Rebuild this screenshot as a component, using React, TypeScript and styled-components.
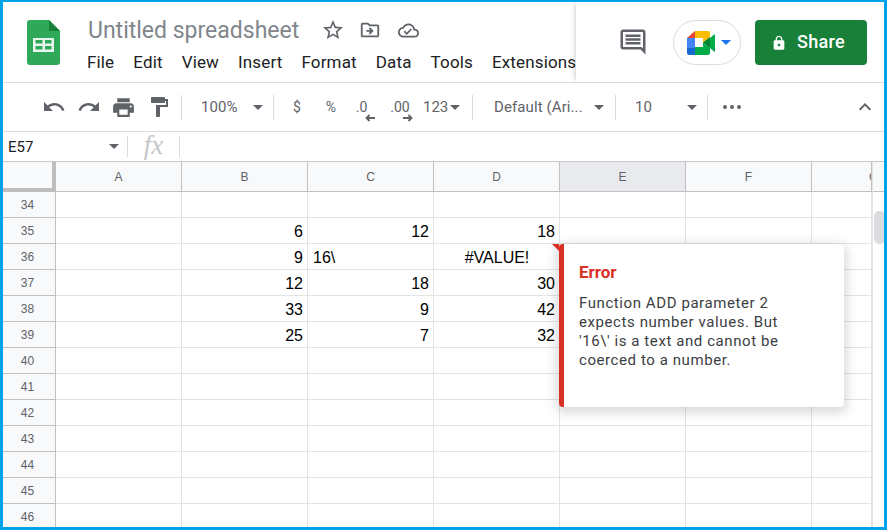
import React from 'react'
import styled, { createGlobalStyle } from 'styled-components'

const GlobalStyle = createGlobalStyle`
    html, body {
        margin: 0;
        padding: 0;
        background: #fff;
    }
`

const menus = ['File', 'Edit', 'View', 'Insert', 'Format', 'Data', 'Tools', 'Extensions']
const rowNumbers = [34, 35, 36, 37, 38, 39, 40, 41, 42, 43, 44, 45, 46]
const columns = ['A', 'B', 'C', 'D', 'E', 'F', 'G']

type CellData = { text: string; align?: 'left' | 'right' | 'center' }
const cells: Record<number, Record<string, CellData>> = {
    35: { B: { text: '6' }, C: { text: '12' }, D: { text: '18' } },
    36: { B: { text: '9' }, C: { text: '16\\', align: 'left' }, D: { text: '#VALUE!', align: 'center' } },
    37: { B: { text: '12' }, C: { text: '18' }, D: { text: '30' } },
    38: { B: { text: '33' }, C: { text: '9' }, D: { text: '42' } },
    39: { B: { text: '25' }, C: { text: '7' }, D: { text: '32' } },
}

function Icon({ d, size, color = '#5f6368', box = 24 }: { d: string; size: number; color?: string; box?: number }) {
    return (
        <svg width={size} height={size} viewBox={`0 0 ${box} ${box}`} fill={color}>
            <path d={d} />
        </svg>
    )
}

const paths = {
    undo: 'M12.5 8c-2.65 0-5.05.99-6.9 2.6L2 7v9h9l-3.62-3.62c1.39-1.16 3.16-1.88 5.12-1.88 3.54 0 6.55 2.31 7.6 5.5l2.37-.78C21.08 11.03 17.15 8 12.5 8z',
    redo: 'M18.4 10.6C16.55 8.99 14.15 8 11.5 8c-4.65 0-8.58 3.03-9.96 7.22L3.9 16c1.05-3.19 4.05-5.5 7.6-5.5 1.95 0 3.73.72 5.12 1.88L13 16h9V7l-3.6 3.6z',
    print: 'M19 8H5c-1.66 0-3 1.34-3 3v6h4v4h12v-4h4v-6c0-1.66-1.34-3-3-3zm-3 11H8v-5h8v5zm3-7c-.55 0-1-.45-1-1s.45-1 1-1 1 .45 1 1-.45 1-1 1zm-1-9H6v4h12V3z',
    paint: 'M18 4V3c0-.55-.45-1-1-1H5c-.55 0-1 .45-1 1v4c0 .55.45 1 1 1h12c.55 0 1-.45 1-1V6h1v4H9v11c0 .55.45 1 1 1h2c.55 0 1-.45 1-1v-9h8V4h-3z',
    star: 'M22 9.24l-7.19-.62L12 2 9.19 8.63 2 9.24l5.46 4.73L5.82 21 12 17.27 18.18 21l-1.63-7.03L22 9.24zM12 15.4l-3.76 2.27 1-4.28-3.32-2.88 4.38-.38L12 6.1l1.71 4.04 4.38.38-3.32 2.88 1 4.28L12 15.4z',
    move: 'M20 6h-8l-2-2H4c-1.1 0-2 .9-2 2v12c0 1.1.9 2 2 2h16c1.1 0 2-.9 2-2V8c0-1.1-.9-2-2-2zm0 12H4V6h5.17l2 2H20v10zM12.16 12H8v2h4.16l-1.59 1.59L12 17l4-4-4-4-1.41 1.41z',
    cloud: 'M19.35 10.04C18.67 6.59 15.64 4 12 4 9.11 4 6.6 5.64 5.35 8.04 2.34 8.36 0 10.91 0 14c0 3.31 2.69 6 6 6h13c2.76 0 5-2.24 5-5 0-2.64-2.05-4.78-4.65-4.96zM19 18H6c-2.21 0-4-1.79-4-4 0-2.05 1.53-3.76 3.56-3.97l1.07-.11.5-.95C8.08 7.14 9.94 6 12 6c2.62 0 4.88 1.86 5.39 4.43l.3 1.5 1.53.11c1.56.1 2.78 1.41 2.78 2.96 0 1.65-1.35 3-3 3zm-9-3.82l-2.09-2.09L6.5 13.5 10 17l6.01-6.01-1.41-1.41z',
    comment: 'M21.99 4c0-1.1-.89-2-1.99-2H4c-1.1 0-2 .9-2 2v12c0 1.1.9 2 2 2h14l4 4-.01-18zM20 4v13.17L18.83 16H4V4h16zM6 12h12v2H6zm0-3h12v2H6zm0-3h12v2H6z',
    lock: 'M18 8h-1V6c0-2.76-2.24-5-5-5S7 3.24 7 6v2H6c-1.1 0-2 .9-2 2v10c0 1.1.9 2 2 2h12c1.1 0 2-.9 2-2V10c0-1.1-.9-2-2-2zm-6 9c-1.1 0-2-.9-2-2s.9-2 2-2 2 .9 2 2-.9 2-2 2zm3.1-9H8.9V6c0-1.71 1.39-3.1 3.1-3.1 1.71 0 3.1 1.39 3.1 3.1v2z',
    chevron: 'M12 8l-6 6 1.41 1.41L12 10.83l4.59 4.58L18 14z',
}

function SheetsLogo() {
    return (
        <svg width="33" height="45" viewBox="0 0 33 45">
            <path d="M3 0h19l11 11v31a3 3 0 0 1-3 3H3a3 3 0 0 1-3-3V3a3 3 0 0 1 3-3z" fill="#2fa85a" />
            <path d="M22 0l11 11H22z" fill="#188038" />
            <path
                fillRule="evenodd"
                d="M6 18h21v14H6zM8.500 20v3.500h7V20zm9.500 0v3.500h6.500V20zM8.500 26v3.500h7V26zm9.500 0v3.500h6.500V26z"
                fill="#e8f5ec"
            />
        </svg>
    )
}

function MeetLogo() {
    return (
        <svg width="28" height="24" viewBox="0 0 28 24">
            <path d="M8 0L0 7h8z" fill="#ea4335" />
            <path d="M8 0h13a2 2 0 0 1 2 2v4l-7 5.500V7H8z" fill="#fbbc04" />
            <path d="M0 7h8v10H0z" fill="#4285f4" />
            <path d="M0 17h8v7H2a2 2 0 0 1-2-2z" fill="#1967d2" />
            <path d="M8 16h8v-4.500l7 5.500v5a2 2 0 0 1-2 2H8z" fill="#00ac47" />
            <path d="M16 11.500L23 6v11z" fill="#00832d" />
            <path d="M23 7l4-3.500a.6.6 0 0 1 1 .5v16a.6.6 0 0 1-1 .5L23 17z" fill="#00ac47" />
        </svg>
    )
}

function DecimalArrow({ right }: { right?: boolean }) {
    return (
        <ArrowSvg width="10" height="8" viewBox="0 0 10 8" fill="none" stroke="#5f6368" strokeWidth="1.800">
            {right ? <path d="M0 4h8.500M5.500 1l3 3-3 3" /> : <path d="M10 4H1.500M4.500 1l-3 3 3 3" />}
        </ArrowSvg>
    )
}

export default function App() {
    return (
        <>
            <GlobalStyle />
            <Page>
                <Header>
                    <LogoSlot>
                        <SheetsLogo />
                    </LogoSlot>
                    <TitleColumn>
                        <TitleRow>
                            <Title>Untitled spreadsheet</Title>
                            <TitleIcons>
                                <Icon d={paths.star} size={24} />
                                <Icon d={paths.move} size={22} />
                                <CloudSlot>
                                    <Icon d={paths.cloud} size={21} />
                                </CloudSlot>
                            </TitleIcons>
                        </TitleRow>
                        <MenuRow>
                            {menus.map((menu) => (
                                <MenuItem key={menu}>{menu}</MenuItem>
                            ))}
                        </MenuRow>
                    </TitleColumn>
                    <HeaderActions>
                        <CommentSlot>
                            <Icon d={paths.comment} size={30} />
                        </CommentSlot>
                        <MeetPill>
                            <MeetLogo />
                            <Caret color="#1a73e8" />
                        </MeetPill>
                        <ShareButton>
                            <Icon d={paths.lock} size={16} color="#fff" />
                            <ShareLabel>Share</ShareLabel>
                        </ShareButton>
                    </HeaderActions>
                </Header>

                <Toolbar>
                    <ToolButton width={35}>
                        <Icon d={paths.undo} size={24} />
                    </ToolButton>
                    <ToolButton width={35}>
                        <Icon d={paths.redo} size={24} />
                    </ToolButton>
                    <ToolButton width={35}>
                        <Icon d={paths.print} size={25} />
                    </ToolButton>
                    <ToolButton width={35}>
                        <Icon d={paths.paint} size={24} />
                    </ToolButton>
                    <ToolSeparator />
                    <ToolSelect width={91} pad={19} end={5}>
                        100%
                        <Caret />
                    </ToolSelect>
                    <ToolSeparator />
                    <ToolButton width={46}>
                        <ToolText>$</ToolText>
                    </ToolButton>
                    <ToolButton width={22}>
                        <ToolText>%</ToolText>
                    </ToolButton>
                    <DecimalButton width={39}>
                        <ToolText>.0</ToolText>
                        <DecimalArrow />
                    </DecimalButton>
                    <DecimalButton width={38}>
                        <ToolText>.00</ToolText>
                        <DecimalArrow right />
                    </DecimalButton>
                    <NumberFormat>
                        123
                        <Caret />
                    </NumberFormat>
                    <ToolSeparator />
                    <ToolSelect width={142} pad={21} end={6}>
                        Default (Ari...
                        <Caret />
                    </ToolSelect>
                    <ToolSeparator />
                    <ToolSelect width={91} pad={19} end={5}>
                        10
                        <Caret />
                    </ToolSelect>
                    <ToolSeparator />
                    <MoreDots>
                        <span />
                        <span />
                        <span />
                    </MoreDots>
                    <CollapseSlot>
                        <Icon d={paths.chevron} size={24} />
                    </CollapseSlot>
                </Toolbar>

                <FormulaBar>
                    <NameBox>
                        E57
                        <Caret />
                    </NameBox>
                    <FormulaSeparator />
                    <FxLabel>fx</FxLabel>
                    <FormulaSeparator />
                </FormulaBar>

                <Sheet>
                    <Grid>
                        <Corner />
                        {columns.map((col) => (
                            <ColumnHeader key={col} active={col === 'E'} clipped={col === 'G'}>
                                {col}
                            </ColumnHeader>
                        ))}
                        {rowNumbers.map((row) => (
                            <React.Fragment key={row}>
                                <RowHeader>{row}</RowHeader>
                                {columns.map((col) => {
                                    const cell = cells[row]?.[col]
                                    return (
                                        <Cell key={col} align={cell?.align ?? 'right'}>
                                            {cell?.text}
                                        </Cell>
                                    )
                                })}
                            </React.Fragment>
                        ))}
                    </Grid>
                    <ScrollTrack>
                        <GutterHead />
                        <ScrollThumb />
                    </ScrollTrack>
                    <ErrorPopup>
                        <ErrorNotch />
                        <ErrorTitle>Error</ErrorTitle>
                        <ErrorBody>
                            Function ADD parameter 2
                            <br />
                            expects number values. But
                            <br />
                            '16\' is a text and cannot be
                            <br />
                            coerced to a number.
                        </ErrorBody>
                    </ErrorPopup>
                </Sheet>
            </Page>
        </>
    )
}

const Page = styled.div`
    box-sizing: border-box;
    width: 887px;
    height: 530px;
    overflow: hidden;
    display: flex;
    flex-direction: column;
    background: #fff;
    border-style: solid;
    border-color: #00a2e8;
    border-width: 2px 3px 3px 3px;
    font-family: Roboto, 'Liberation Sans', sans-serif;
`

const Header = styled.header`
    box-sizing: border-box;
    flex: none;
    height: 81px;
    display: flex;
    border-bottom: 1px solid #dadce0;
`

const LogoSlot = styled.div`
    flex: none;
    width: 85px;
    padding: 18px 0 0 24px;
    box-sizing: border-box;
`

const TitleColumn = styled.div`
    flex: 1;
    min-width: 0;
    overflow: hidden;
    padding-top: 13px;
`

const TitleRow = styled.div`
    display: flex;
    align-items: center;
    height: 30px;
`

const Title = styled.div`
    font-size: 23px;
    color: #80868b;
    width: 233px;
    flex: none;
    white-space: nowrap;
`

const TitleIcons = styled.div`
    display: flex;
    align-items: center;
    gap: 14px;
`

const CloudSlot = styled.div`
    display: flex;
    margin-left: 3px;
`

const MenuRow = styled.nav`
    display: flex;
    margin: 5px 0 0 -1px;
    gap: 19px;
    white-space: nowrap;
`

const MenuItem = styled.span`
    font-size: 17px;
    line-height: 24px;
    letter-spacing: 0.15px;
    color: #202124;
`

const HeaderActions = styled.div`
    flex: none;
    width: 308px;
    display: flex;
    align-items: flex-start;
    padding-top: 18px;
    box-sizing: border-box;
    background: #fff;
    box-shadow: -3px 0 4px -2px rgba(60, 64, 67, 0.25);
    position: relative;
`

const CommentSlot = styled.div`
    width: 97px;
    height: 43px;
    display: flex;
    align-items: center;
    justify-content: center;
    flex: none;
    padding-left: 16px;
    box-sizing: border-box;
`

const MeetPill = styled.div`
    box-sizing: border-box;
    flex: none;
    width: 68px;
    height: 45px;
    border: 1px solid #dadce0;
    border-radius: 23px;
    display: flex;
    align-items: center;
    padding-left: 13px;
    gap: 6px;
`

const ShareButton = styled.div`
    flex: none;
    box-sizing: border-box;
    margin-left: 14px;
    width: 112px;
    height: 45px;
    border-radius: 4px;
    background: #188038;
    color: #fff;
    display: flex;
    align-items: center;
    padding-left: 16px;
    gap: 10px;
`

const ShareLabel = styled.span`
    font-size: 18px;
    font-weight: 500;
    letter-spacing: 0.3px;
    padding-bottom: 3px;
`

const Caret = styled.i<{ color?: string }>`
    flex: none;
    display: block;
    width: 0;
    height: 0;
    border-left: 5px solid transparent;
    border-right: 5px solid transparent;
    border-top: 5px solid ${(props) => props.color ?? '#5f6368'};
`

const Toolbar = styled.div`
    box-sizing: border-box;
    flex: none;
    height: 49px;
    display: flex;
    align-items: center;
    padding-left: 33px;
    border-bottom: 1px solid #dadce0;
    color: #5f6368;
    font-size: 15px;
`

const ToolButton = styled.div<{ width: number }>`
    flex: none;
    width: ${(props) => props.width}px;
    height: 30px;
    display: flex;
    align-items: center;
    justify-content: center;
`

const ToolText = styled.span`
    font-size: 14px;
    color: #5f6368;
`

const ToolSeparator = styled.div`
    flex: none;
    width: 1px;
    height: 25px;
    margin: 0 0 0 5px;
    background: #dadce0;
`

const ToolSelect = styled.div<{ width: number; pad: number; end: number }>`
    flex: none;
    box-sizing: border-box;
    width: ${(props) => props.width}px;
    margin-left: -5px;
    padding: 0 ${(props) => props.end}px 0 ${(props) => props.pad + 5}px;
    display: flex;
    align-items: center;
    justify-content: space-between;
    white-space: nowrap;
    font-size: 15px;
    letter-spacing: 0.1px;
`

const DecimalButton = styled(ToolButton)`
    position: relative;
`

const ArrowSvg = styled.svg`
    position: absolute;
    bottom: 0;
    left: 50%;
    margin-left: 3px;
`

const NumberFormat = styled.div`
    flex: none;
    display: flex;
    align-items: center;
    gap: 2px;
    margin-left: 4px;
    width: 44px;
    font-size: 15px;
`

const MoreDots = styled.div`
    flex: none;
    display: flex;
    gap: 3px;
    margin-left: 15px;

    span {
        display: block;
        width: 4px;
        height: 4px;
        border-radius: 50%;
        background: #5f6368;
    }
`

const CollapseSlot = styled.div`
    margin-left: auto;
    margin-right: 7px;
    display: flex;
`

const FormulaBar = styled.div`
    box-sizing: border-box;
    flex: none;
    height: 30px;
    display: flex;
    align-items: center;
    border-bottom: 1px solid #c7c7c7;
`

const NameBox = styled.div`
    flex: none;
    box-sizing: border-box;
    width: 124px;
    padding: 0 8px 0 5px;
    display: flex;
    align-items: center;
    justify-content: space-between;
    font-size: 15px;
    color: #202124;
`

const FormulaSeparator = styled.div`
    flex: none;
    width: 1px;
    height: 21px;
    background: #dadce0;
`

const FxLabel = styled.div`
    flex: none;
    width: 51px;
    height: 28px;
    text-align: center;
    font: italic 27px/25px 'Liberation Serif', serif;
    color: #c4c6c8;
`

const Sheet = styled.div`
    flex: 1;
    min-height: 0;
    display: flex;
    overflow: hidden;
    position: relative;
`

const Grid = styled.div`
    flex: none;
    display: grid;
    width: 869px;
    grid-template-columns: 53px repeat(6, 126px) 60px;
    grid-auto-rows: 26px;
    grid-template-rows: 30px;
    align-content: start;
`

const Corner = styled.div`
    box-sizing: border-box;
    background: #f8f9fa;
    border-right: 4px solid #bdbdbd;
    border-bottom: 4px solid #bdbdbd;
`

const ColumnHeader = styled.div<{ active?: boolean; clipped?: boolean }>`
    box-sizing: border-box;
    overflow: hidden;
    display: flex;
    align-items: center;
    justify-content: ${(props) => (props.clipped ? 'flex-start' : 'center')};
    padding-left: ${(props) => (props.clipped ? '57px' : '0')};
    padding-top: 1px;
    background: ${(props) => (props.active ? '#e8eaed' : '#f8f9fa')};
    border-right: 1px solid #c0c0c0;
    border-bottom: 1px solid #c0c0c0;
    font: 12px 'Liberation Sans', sans-serif;
    color: #5f6368;
`

const RowHeader = styled.div`
    box-sizing: border-box;
    display: flex;
    align-items: center;
    justify-content: center;
    background: #f8f9fa;
    border-right: 1px solid #c0c0c0;
    border-bottom: 1px solid #c0c0c0;
    font: 12px 'Liberation Sans', sans-serif;
    color: #5f6368;
    padding: 0 3px 0 0;
`

const Cell = styled.div<{ align: 'left' | 'right' | 'center' }>`
    box-sizing: border-box;
    border-right: 1px solid #e2e3e3;
    border-bottom: 1px solid #e2e3e3;
    padding: 0 4px 0 5px;
    text-align: ${(props) => props.align};
    font: 16px/27px 'Liberation Sans', sans-serif;
    color: #000;
    white-space: nowrap;
    overflow: hidden;
`

const ScrollTrack = styled.div`
    flex: 1;
    box-sizing: border-box;
    border-left: 1px solid #e2e3e3;
    background: #fff;
`

const GutterHead = styled.div`
    box-sizing: border-box;
    height: 30px;
    background: #f8f9fa;
    border-bottom: 1px solid #c0c0c0;
`

const ScrollThumb = styled.div`
    width: 11px;
    height: 33px;
    margin: 19px 0 0 1px;
    border-radius: 5px;
    background: #dadce0;
`

const ErrorPopup = styled.div`
    position: absolute;
    left: 556px;
    top: 82px;
    box-sizing: border-box;
    width: 285px;
    height: 163px;
    padding: 18px 16px 0 15px;
    background: #fff;
    border-left: 5px solid #d93025;
    border-radius: 4px;
    box-shadow: 0 3px 12px 2px rgba(60, 64, 67, 0.22);
`

const ErrorNotch = styled.div`
    position: absolute;
    left: -12px;
    top: 0;
    width: 0;
    height: 0;
    border-top: 7px solid #d93025;
    border-left: 7px solid transparent;
`

const ErrorTitle = styled.div`
    font-size: 17px;
    font-weight: 700;
    line-height: 20px;
    color: #d93025;
`

const ErrorBody = styled.div`
    margin-top: 12px;
    font-size: 15px;
    line-height: 19px;
    letter-spacing: 0.58px;
    color: #3c4043;
    white-space: nowrap;
`
